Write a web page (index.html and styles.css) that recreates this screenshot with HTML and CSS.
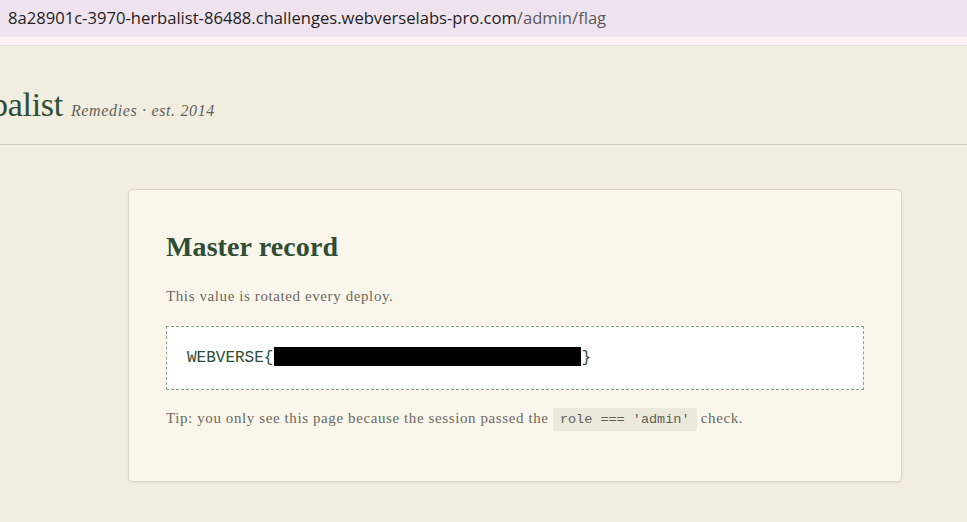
FILE: index.html
```html
<!DOCTYPE html>
<html>
<head>
<meta charset="utf-8">
<link rel="stylesheet" href="styles.css">
</head>
<body>
<div class="addr"><span class="host">8a28901c-3970-herbalist-86488.challenges.webverselabs-pro.com</span><span class="path">/admin/flag</span></div>
<div class="addr-strip"></div>
<header class="site-header">
  <span class="brand">Herbalist</span>
  <span class="tagline">Remedies · est. 2014</span>
</header>
<main class="main">
  <section class="card">
    <h1 class="title">Master record</h1>
    <p class="note">This value is rotated every deploy.</p>
    <div class="flag"><span>WEBVERSE{</span><span class="redact"></span><span>}</span></div>
    <p class="tip">Tip: you only see this page because the session passed the <code class="code">role === 'admin'</code> check.</p>
  </section>
</main>
</body>
</html>
```

FILE: styles.css
```css
html, body {
  margin: 0;
  padding: 0;
}
body {
  background: #f2ede1;
  font-family: "Liberation Serif", "DejaVu Serif", serif;
  overflow: hidden;
  height: 522px;
}
.addr {
  height: 37px;
  background: #efe3ef;
  font-family: "Open Sans", "Liberation Sans", Arial, sans-serif;
  font-size: 16.6px;
  line-height: 35px;
  padding-left: 8px;
  color: #1f1f1f;
  white-space: nowrap;
}
.addr .path {
  color: #5a5a5a;
}
.addr-strip {
  height: 8px;
  background: #fdf2f8;
  border-bottom: 1px solid #ead8e0;
}
.site-header {
  height: 99px;
  border-bottom: 1px solid #d3cbb9;
  display: flex;
  align-items: baseline;
  box-sizing: border-box;
  white-space: nowrap;
  line-height: 1;
}
.brand {
  font-size: 34px;
  letter-spacing: -0.3px;
  color: #2e4d34;
  margin-left: -59px;
  padding-top: 42px;
}
.tagline {
  font-size: 16px;
  letter-spacing: 0.65px;
  font-style: italic;
  color: #5e6259;
  margin-left: 8px;
}
.main {
  padding-top: 44px;
  padding-left: 128px;
}
.card {
  width: 774px;
  height: 293px;
  box-sizing: border-box;
  background: #faf6ec;
  border: 1px solid #ddd5c3;
  border-radius: 5px;
  box-shadow: 0 1px 3px rgba(120, 100, 60, 0.1);
  padding: 41px 37px 0 37px;
}
.title {
  margin: 0;
  font-size: 28px;
  letter-spacing: 0.1px;
  font-weight: bold;
  color: #2e4d34;
  line-height: 32px;
}
.note {
  margin: 23px 0 0 0;
  font-size: 15px;
  letter-spacing: 0.6px;
  color: #6a6a5e;
  line-height: 20px;
}
.flag {
  margin-top: 20px;
  height: 64px;
  box-sizing: border-box;
  background: #ffffff;
  border: 1px dashed #85a876;
  padding: 0 20px;
  display: flex;
  align-items: center;
  font-family: "Liberation Mono", "DejaVu Sans Mono", monospace;
  font-size: 16px;
  color: #2e4d34;
}
.redact {
  display: inline-block;
  width: 307px;
  height: 19px;
  background: #000;
  margin: -3px 0 0 1px;
}
.tip {
  margin: 17px 0 0 0;
  font-size: 15px;
  letter-spacing: 0.6px;
  color: #6a6a5e;
  line-height: 22px;
}
.code {
  font-family: "Liberation Mono", "DejaVu Sans Mono", monospace;
  font-size: 13.5px;
  letter-spacing: 0;
  background: #ece8dc;
  color: #5e6259;
  padding: 4px 7px;
  border-radius: 3px;
}
```
